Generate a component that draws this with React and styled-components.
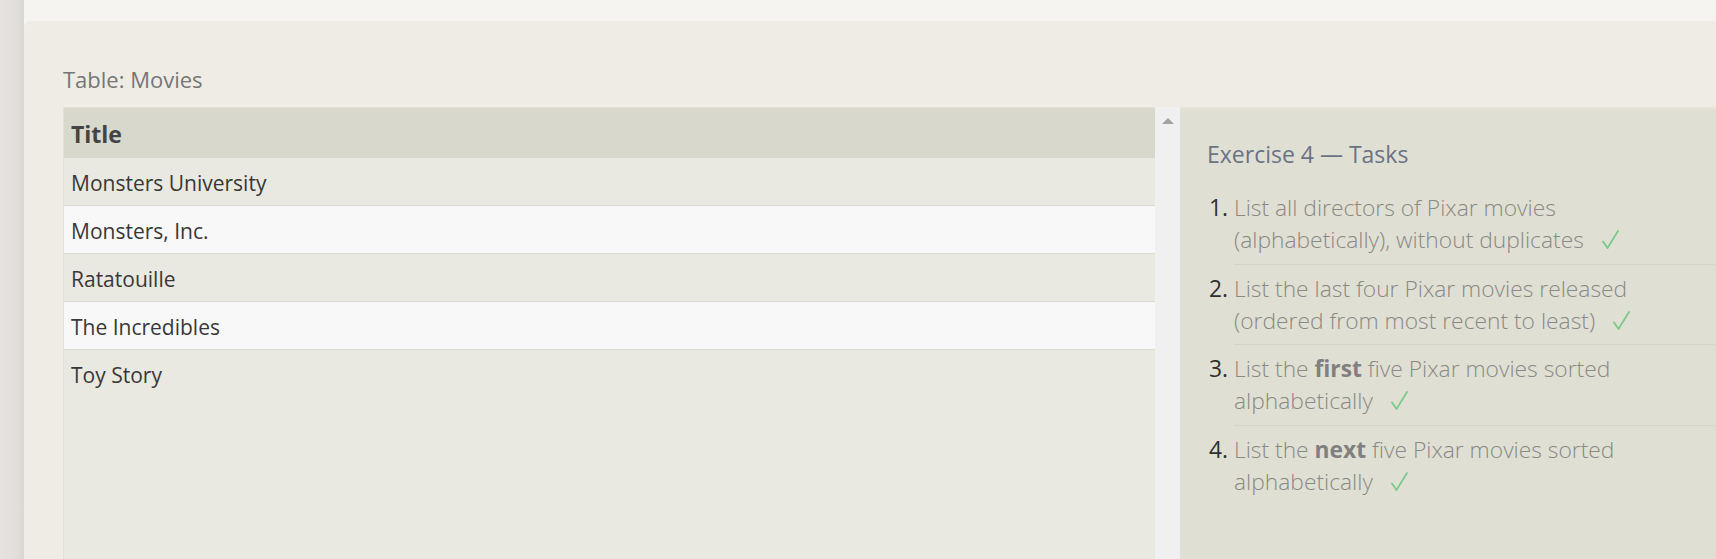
import { createGlobalStyle } from "styled-components";
import styled from "styled-components";

const GlobalStyle = createGlobalStyle`
  html, body {
    margin: 0;
    padding: 0;
    height: 100%;
  }
  body {
    font-family: "Open Sans", "Noto Sans", "Liberation Sans", sans-serif;
    background: #efece5;
  }
`;

const movies = [
  "Monsters University",
  "Monsters, Inc.",
  "Ratatouille",
  "The Incredibles",
  "Toy Story",
];

// tasks, with the emphasised word split out
const tasks = [
  { text: ["List all directors of Pixar movies (alphabetically), without duplicates"] },
  { text: ["List the last four Pixar movies released (ordered from most recent to least)"] },
  { text: ["List the ", "first", " five Pixar movies sorted alphabetically"] },
  { text: ["List the ", "next", " five Pixar movies sorted alphabetically"] },
];

const Page = styled.div`
  display: flex;
  height: 100vh;
  overflow: hidden;
`;

const SideEdge = styled.div`
  flex: 0 0 24px;
  background: linear-gradient(to right, #e6e2df, #e2dedb 70%, #dad6d2);
`;

const Main = styled.div`
  flex: 1;
  display: flex;
  flex-direction: column;
  min-width: 0;
  background: #f5f4f0;
`;

const TopBar = styled.div`
  height: 21px;
  flex: none;
`;

const Panel = styled.section`
  flex: 1;
  display: flex;
  flex-direction: column;
  min-height: 0;
  background: #efece5;
  border-top-left-radius: 6px;
  padding: 43px 0 0 39px;
`;

const Caption = styled.h2`
  margin: 0 0 13px;
  font-size: 22px;
  line-height: 30px;
  font-weight: 400;
  color: #767676;
`;

const Workspace = styled.div`
  flex: 1;
  display: flex;
  min-height: 0;
`;

const TableArea = styled.div`
  flex: 0 0 1117px;
  display: flex;
`;

const TableScroll = styled.div`
  flex: 1;
  background: #eae9e1;
  border-left: 1px solid #e2e1d9;
  border-top: 1px solid #e2e1d9;
`;

const Table = styled.table`
  width: 100%;
  border-collapse: collapse;
`;

const HeadCell = styled.th`
  text-align: left;
  font-size: 23px;
  line-height: 30px;
  font-weight: 700;
  color: #444;
  background: #d9d8cc;
  padding: 11px 7px 9px;
`;

const Row = styled.tr`
  background: ${(p) => (p.$odd ? "#eae9e1" : "#f8f8f8")};

  &:not(:last-child) td {
    border-bottom: 1px solid #dcdbd3;
  }
`;

const Cell = styled.td`
  font-size: 21px;
  line-height: 28px;
  color: #383838;
  padding: 10.5px 7px 8.5px;
  border-bottom: 1px solid transparent;
`;

const ScrollTrack = styled.div`
  flex: 0 0 25px;
  background: #f0f0f0;
  display: flex;
  justify-content: center;
`;

const ScrollArrow = styled.div`
  margin-top: 11px;
  width: 0;
  height: 0;
  border-left: 6px solid transparent;
  border-right: 6px solid transparent;
  border-bottom: 6px solid #a3a3a3;
`;

const TaskPanel = styled.aside`
  flex: 1;
  background: #e0dfd4;
  border-top: 2px solid #e5e4da;
  padding: 29px 0 0 27px;
`;

const TaskTitle = styled.h3`
  margin: 0 0 14px;
  font-size: 23px;
  line-height: 32px;
  font-weight: 400;
  color: #6a7384;
`;

const TaskList = styled.ol`
  margin: 0;
  padding: 0 0 0 27px;
`;

const TaskItem = styled.li`
  padding: 8px 0 7.5px;
  font-size: 22.8px;
  line-height: 32px;
  font-weight: 300;
  color: #8a8984;

  &:not(:last-child) {
    border-bottom: 1px solid #d5d4c9;
  }

  &::marker {
    color: #2f2f2f;
    font-weight: 400;
  }
`;

const TaskText = styled.div`
  max-width: 440px;
`;

const Strong = styled.b`
  font-weight: 700;
  color: #808080;
`;

const Check = styled.svg`
  margin-left: 18px;
  vertical-align: -1px;
`;

function CheckMark() {
  return (
    <Check width="17" height="19" viewBox="0 0 17 19" fill="none">
      <path d="M1 11.5 L5.5 18 L16 1" stroke="#7cca8b" strokeWidth="1.8" strokeLinecap="round" strokeLinejoin="round" />
    </Check>
  );
}

export default function App() {
  return (
    <Page>
      <GlobalStyle />
      <SideEdge />
      <Main>
        <TopBar />
        <Panel>
          <Caption>Table: Movies</Caption>
          <Workspace>
            <TableArea>
              <TableScroll>
                <Table>
                  <thead>
                    <tr>
                      <HeadCell>Title</HeadCell>
                    </tr>
                  </thead>
                  <tbody>
                    {movies.map((m, i) => (
                      <Row key={m} $odd={i % 2 === 0}>
                        <Cell>{m}</Cell>
                      </Row>
                    ))}
                  </tbody>
                </Table>
              </TableScroll>
              <ScrollTrack>
                <ScrollArrow />
              </ScrollTrack>
            </TableArea>
            <TaskPanel>
              <TaskTitle>Exercise 4 — Tasks</TaskTitle>
              <TaskList>
                {tasks.map((t, i) => (
                  <TaskItem key={i}>
                    <TaskText>
                      {t.text.map((part, j) =>
                        j === 1 ? <Strong key={j}>{part}</Strong> : part,
                      )}
                      <CheckMark />
                    </TaskText>
                  </TaskItem>
                ))}
              </TaskList>
            </TaskPanel>
          </Workspace>
        </Panel>
      </Main>
    </Page>
  );
}
